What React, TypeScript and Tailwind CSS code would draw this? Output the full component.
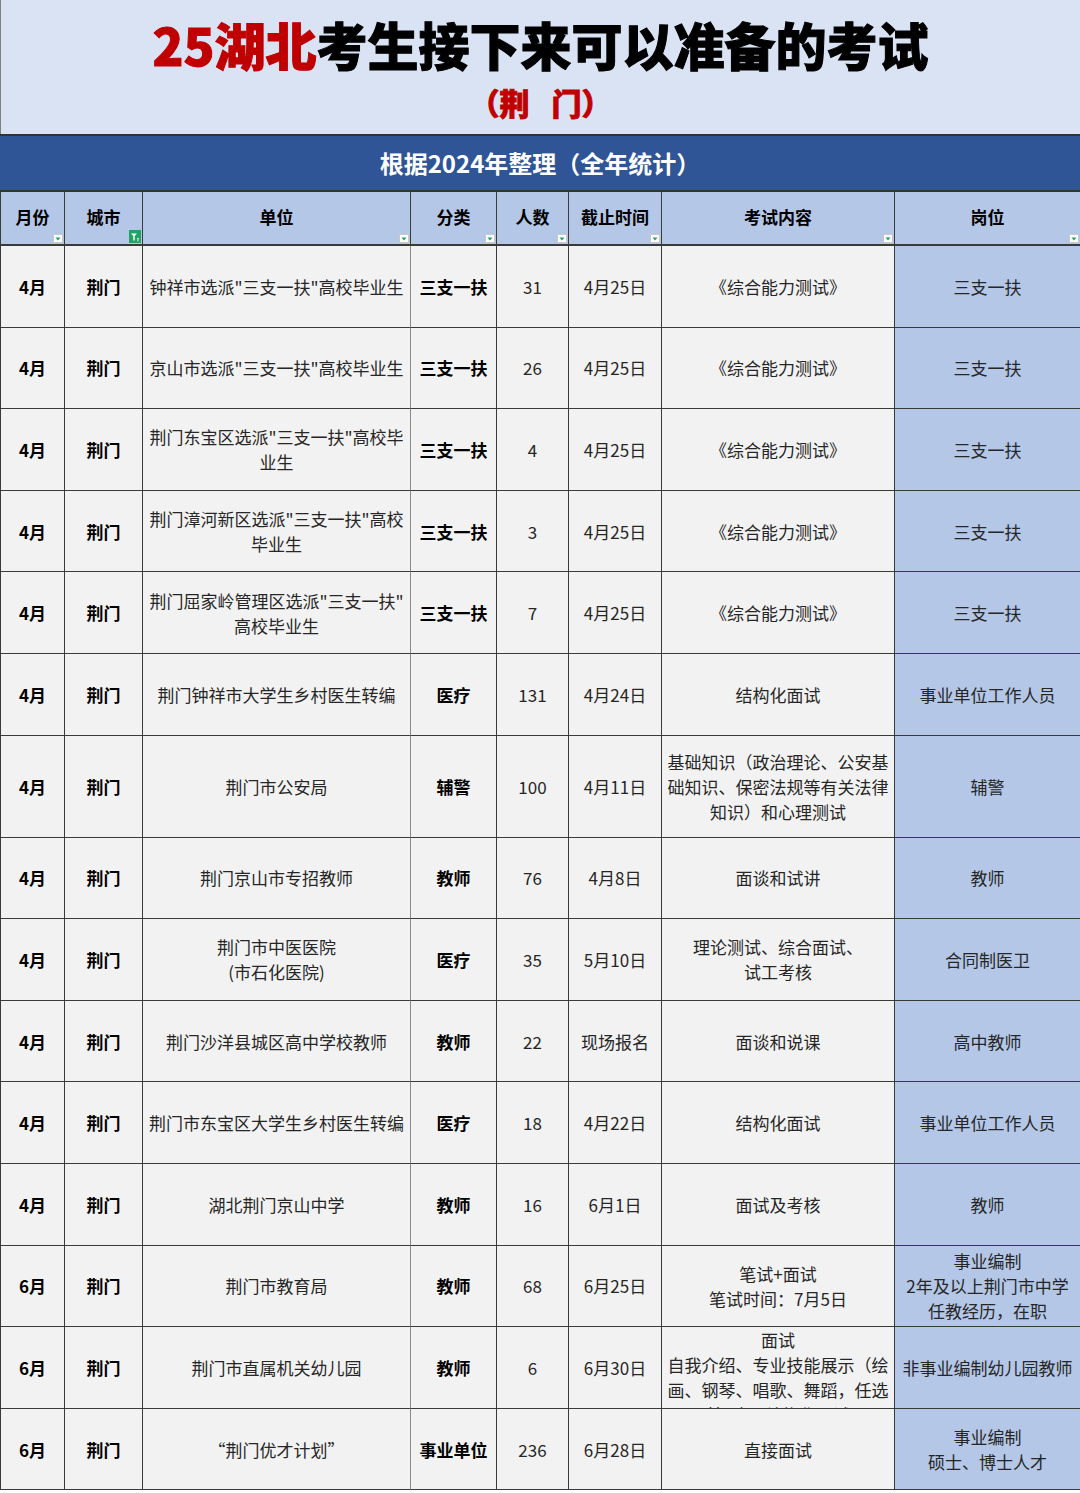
const FONT = { fontFamily: '"Noto Sans CJK SC", "Noto Sans", "Liberation Sans", sans-serif' }

const widths = ["w-[65px]", "w-[78px]", "w-[268px]", "w-[86px]", "w-[72px]", "w-[93px]", "w-[233px]", "w-[185px]"]

const headers = ["月份", "城市", "单位", "分类", "人数", "截止时间", "考试内容", "岗位"]

type Row = {
  month: string
  unit: string[]
  kind: string
  count: string
  deadline: string
  content: string[]
  post: string[]
  tall?: boolean
  clip?: boolean
}

const rows: Row[] = [
  { month: "4月", unit: ['钟祥市选派"三支一扶"高校毕业生'], kind: "三支一扶", count: "31", deadline: "4月25日", content: ["《综合能力测试》"], post: ["三支一扶"] },
  { month: "4月", unit: ['京山市选派"三支一扶"高校毕业生'], kind: "三支一扶", count: "26", deadline: "4月25日", content: ["《综合能力测试》"], post: ["三支一扶"] },
  { month: "4月", unit: ['荆门东宝区选派"三支一扶"高校毕', "业生"], kind: "三支一扶", count: "4", deadline: "4月25日", content: ["《综合能力测试》"], post: ["三支一扶"] },
  { month: "4月", unit: ['荆门漳河新区选派"三支一扶"高校', "毕业生"], kind: "三支一扶", count: "3", deadline: "4月25日", content: ["《综合能力测试》"], post: ["三支一扶"] },
  { month: "4月", unit: ['荆门屈家岭管理区选派"三支一扶"', "高校毕业生"], kind: "三支一扶", count: "7", deadline: "4月25日", content: ["《综合能力测试》"], post: ["三支一扶"] },
  { month: "4月", unit: ["荆门钟祥市大学生乡村医生转编"], kind: "医疗", count: "131", deadline: "4月24日", content: ["结构化面试"], post: ["事业单位工作人员"] },
  { month: "4月", unit: ["荆门市公安局"], kind: "辅警", count: "100", deadline: "4月11日", content: ["基础知识（政治理论、公安基", "础知识、保密法规等有关法律", "知识）和心理测试"], post: ["辅警"], tall: true },
  { month: "4月", unit: ["荆门京山市专招教师"], kind: "教师", count: "76", deadline: "4月8日", content: ["面谈和试讲"], post: ["教师"] },
  { month: "4月", unit: ["荆门市中医医院", "(市石化医院)"], kind: "医疗", count: "35", deadline: "5月10日", content: ["理论测试、综合面试、", "试工考核"], post: ["合同制医卫"] },
  { month: "4月", unit: ["荆门沙洋县城区高中学校教师"], kind: "教师", count: "22", deadline: "现场报名", content: ["面谈和说课"], post: ["高中教师"] },
  { month: "4月", unit: ["荆门市东宝区大学生乡村医生转编"], kind: "医疗", count: "18", deadline: "4月22日", content: ["结构化面试"], post: ["事业单位工作人员"] },
  { month: "4月", unit: ["湖北荆门京山中学"], kind: "教师", count: "16", deadline: "6月1日", content: ["面试及考核"], post: ["教师"] },
  { month: "6月", unit: ["荆门市教育局"], kind: "教师", count: "68", deadline: "6月25日", content: ["笔试+面试", "笔试时间：7月5日"], post: ["事业编制", "2年及以上荆门市中学", "任教经历，在职"] },
  { month: "6月", unit: ["荆门市直属机关幼儿园"], kind: "教师", count: "6", deadline: "6月30日", content: ["面试", "自我介绍、专业技能展示（绘", "画、钢琴、唱歌、舞蹈，任选", "其一）、结构化面试"], post: ["非事业编制幼儿园教师"], clip: true },
  { month: "6月", unit: ["“荆门优才计划”"], kind: "事业单位", count: "236", deadline: "6月28日", content: ["直接面试"], post: ["事业编制", "硕士、博士人才"] },
]

function FilterMark({ active }: { active?: boolean }) {
  if (active) {
    return (
      <span className="absolute right-[1px] bottom-[1px] w-[12px] h-[13px] bg-[#21a366] flex items-center justify-center">
        <svg width="10" height="10" viewBox="0 0 10 10">
          <path d="M1 1.5h6l-2.3 2.6v4.4h-1.4V4.1z" fill="#fff" />
          <path d="M7.2 6.5h1.6M8 6.5v3" stroke="#fff" strokeWidth="0.9" />
        </svg>
      </span>
    )
  }
  return (
    <span className="absolute right-[1px] bottom-[1px] w-[10px] h-[9px] bg-white border border-[#c8c8c8] flex items-center justify-center">
      <svg width="6" height="4" viewBox="0 0 6 4">
        <path d="M0.5 0.5h5L3 3.5z" fill="#21a366" />
      </svg>
    </span>
  )
}

function Lines({ lines }: { lines: string[] }) {
  return (
    <>
      {lines.map((l, i) => (
        <div key={i} className="whitespace-nowrap">
          {l}
        </div>
      ))}
    </>
  )
}

function DataRow({ r }: { r: Row }) {
  const cell = "flex flex-col justify-center items-center text-center border-r border-b border-[#3a3a3a] shrink-0 overflow-hidden leading-[25px]"
  return (
    <div className={"flex bg-[#f2f2f2] " + (r.tall ? "h-[102px]" : "h-[81.6px]")}>
      <div className={cell + " " + widths[0] + " border-l font-bold text-black"}>{r.month}</div>
      <div className={cell + " " + widths[1] + " font-bold text-black"}>荆门</div>
      <div className={cell + " " + widths[2] + " border-r-[#8a8a8a] text-[#262626]"}>
        <Lines lines={r.unit} />
      </div>
      <div className={cell + " " + widths[3] + " font-bold text-black"}>{r.kind}</div>
      <div className={cell + " " + widths[4] + " text-[#262626]"}>{r.count}</div>
      <div className={cell + " " + widths[5] + " text-[#262626]"}>{r.deadline}</div>
      <div className={cell + " " + widths[6] + " text-[#262626] " + (r.clip ? "!justify-start" : "")}>
        <Lines lines={r.content} />
      </div>
      <div className={cell + " " + widths[7] + " bg-[#b4c7e7] border-r-0 text-[#262626]"}>
        <Lines lines={r.post} />
      </div>
    </div>
  )
}

export default function App() {
  return (
    <div className="w-[1080px] h-[1493px] overflow-hidden bg-white text-[17px]" style={FONT}>
      <div className="h-[134px] bg-[#dae3f3] border-l border-[#7f7f7f] flex flex-col items-center">
        <h1 className="text-[51px] font-black leading-none mt-[19px] text-black [-webkit-text-stroke:1px_currentColor]">
          <span className="text-[#c00000]">25湖北</span>考生接下来可以准备的考试
        </h1>
        <div className="text-[30px] font-black leading-none mt-[17px] text-[#c00000] [-webkit-text-stroke:0.8px_currentColor]">
          （荆<span className="inline-block w-[22px]"></span>门）
        </div>
      </div>
      <div className="h-[58px] bg-[#2f5597] border-y-2 border-[#333] flex items-center justify-center text-white text-[24px] font-bold">
        根据2024年整理（全年统计）
      </div>
      <div className="flex h-[54px] bg-[#b4c7e7]">
        {headers.map((h, i) => (
          <div
            key={h}
            className={
              "relative flex items-center justify-center font-bold text-black border-r border-b-2 border-[#3a3a3a] shrink-0 pb-[2px] " +
              widths[i] +
              (i === 0 ? " border-l" : "") +
              (i === 7 ? " border-r-0" : "")
            }
          >
            {h}
            <FilterMark active={i === 1} />
          </div>
        ))}
      </div>
      {rows.map((r, i) => (
        <DataRow key={i} r={r} />
      ))}
    </div>
  )
}
